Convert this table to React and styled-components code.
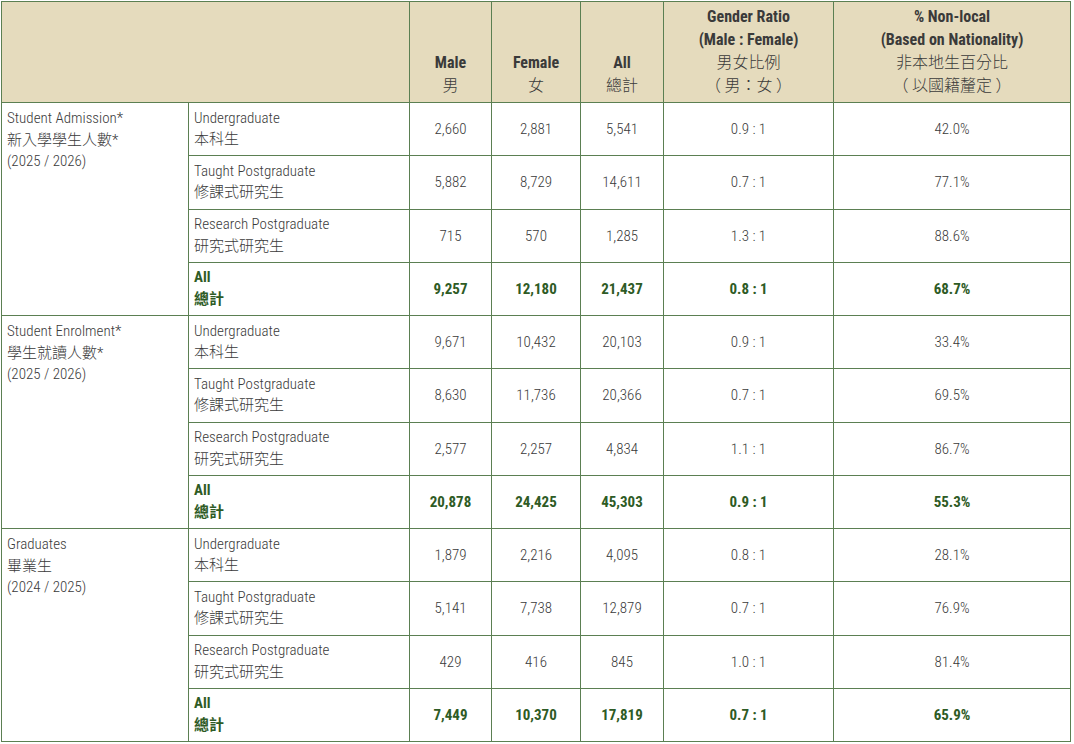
import React from "react";
import styled, { createGlobalStyle } from "styled-components";

const Global = createGlobalStyle`
  html, body { margin: 0; padding: 0; background: #fff; }
  body {
    font-family: "Roboto Condensed", "Liberation Sans Narrow", "DejaVu Sans Condensed", Roboto, "Noto Sans CJK TC", sans-serif;
    color: #333;
  }
`;

const Wrap = styled.div`
  padding: 1px 0 0 1px;
`;

const Table = styled.table`
  border-collapse: collapse;
  table-layout: fixed;
  width: 1069px;
  font-size: 15px;
`;

const HeadCell = styled.th`
  background: #e5dbbd;
  border: 1px solid #5b7f52;
  height: 101px;
  padding: 0 6px 5px;
  vertical-align: bottom;
  text-align: center;
  font-size: 16px;
  font-weight: 300;
  line-height: 23px;
  color: #3a3a3a;
  box-sizing: border-box;
`;

const HeadEn = styled.span`
  font-weight: 700;
  display: block;
`;

const HeadZh = styled.span`
  display: block;
  white-space: pre;
`;

const Row = styled.tr`
  height: 53.25px;
`;

const GroupCell = styled.td`
  border: 1px solid #5b7f52;
  vertical-align: top;
  padding: 5px 5px;
  line-height: 21.5px;
  font-weight: 300;
  color: #3a3a3a;
`;

const LabelCell = styled.td`
  border: 1px solid #5b7f52;
  vertical-align: middle;
  padding: 4px 5px;
  line-height: 21.5px;
  color: ${(p) => (p.$total ? "#2e5b25" : "#3a3a3a")};
  font-weight: ${(p) => (p.$total ? 700 : 300)};
`;

const NumCell = styled.td`
  border: 1px solid #5b7f52;
  vertical-align: middle;
  text-align: center;
  padding: 0 6px;
  color: ${(p) => (p.$total ? "#2e5b25" : "#3a3a3a")};
  font-weight: ${(p) => (p.$total ? 700 : 300)};
`;

const Line = styled.span`
  display: block;
`;

const groups = [
  {
    en: "Student Admission*",
    zh: "新入學學生人數*",
    year: "(2025 / 2026)",
    rows: [
      ["2,660", "2,881", "5,541", "0.9 : 1", "42.0%"],
      ["5,882", "8,729", "14,611", "0.7 : 1", "77.1%"],
      ["715", "570", "1,285", "1.3 : 1", "88.6%"],
      ["9,257", "12,180", "21,437", "0.8 : 1", "68.7%"],
    ],
  },
  {
    en: "Student Enrolment*",
    zh: "學生就讀人數*",
    year: "(2025 / 2026)",
    rows: [
      ["9,671", "10,432", "20,103", "0.9 : 1", "33.4%"],
      ["8,630", "11,736", "20,366", "0.7 : 1", "69.5%"],
      ["2,577", "2,257", "4,834", "1.1 : 1", "86.7%"],
      ["20,878", "24,425", "45,303", "0.9 : 1", "55.3%"],
    ],
  },
  {
    en: "Graduates",
    zh: "畢業生",
    year: "(2024 / 2025)",
    rows: [
      ["1,879", "2,216", "4,095", "0.8 : 1", "28.1%"],
      ["5,141", "7,738", "12,879", "0.7 : 1", "76.9%"],
      ["429", "416", "845", "1.0 : 1", "81.4%"],
      ["7,449", "10,370", "17,819", "0.7 : 1", "65.9%"],
    ],
  },
];

const levels = [
  ["Undergraduate", "本科生"],
  ["Taught Postgraduate", "修課式研究生"],
  ["Research Postgraduate", "研究式研究生"],
  ["All", "總計"],
];

export default function App() {
  return (
    <Wrap>
      <Global />
      <Table>
        <colgroup>
          <col style={{ width: 187 }} />
          <col style={{ width: 221 }} />
          <col style={{ width: 82 }} />
          <col style={{ width: 89 }} />
          <col style={{ width: 83 }} />
          <col style={{ width: 170 }} />
          <col style={{ width: 237 }} />
        </colgroup>
        <thead>
          <tr>
            <HeadCell colSpan={2} />
            <HeadCell>
              <HeadEn>Male</HeadEn>
              <HeadZh>男</HeadZh>
            </HeadCell>
            <HeadCell>
              <HeadEn>Female</HeadEn>
              <HeadZh>女</HeadZh>
            </HeadCell>
            <HeadCell>
              <HeadEn>All</HeadEn>
              <HeadZh>總計</HeadZh>
            </HeadCell>
            <HeadCell>
              <HeadEn>Gender Ratio</HeadEn>
              <HeadEn>(Male : Female)</HeadEn>
              <HeadZh>男女比例</HeadZh>
              <HeadZh>（ 男：女 ）</HeadZh>
            </HeadCell>
            <HeadCell>
              <HeadEn>% Non-local</HeadEn>
              <HeadEn>(Based on Nationality)</HeadEn>
              <HeadZh>非本地生百分比</HeadZh>
              <HeadZh>（ 以國籍釐定 ）</HeadZh>
            </HeadCell>
          </tr>
        </thead>
        <tbody>
          {groups.map((g) =>
            g.rows.map((r, i) => {
              const total = i === 3;
              return (
                <Row key={g.en + i}>
                  {i === 0 && (
                    <GroupCell rowSpan={4}>
                      <Line>{g.en}</Line>
                      <Line>{g.zh}</Line>
                      <Line>{g.year}</Line>
                    </GroupCell>
                  )}
                  <LabelCell $total={total}>
                    <Line>{levels[i][0]}</Line>
                    <Line>{levels[i][1]}</Line>
                  </LabelCell>
                  {r.map((v, j) => (
                    <NumCell key={j} $total={total}>
                      {v}
                    </NumCell>
                  ))}
                </Row>
              );
            })
          )}
        </tbody>
      </Table>
    </Wrap>
  );
}
